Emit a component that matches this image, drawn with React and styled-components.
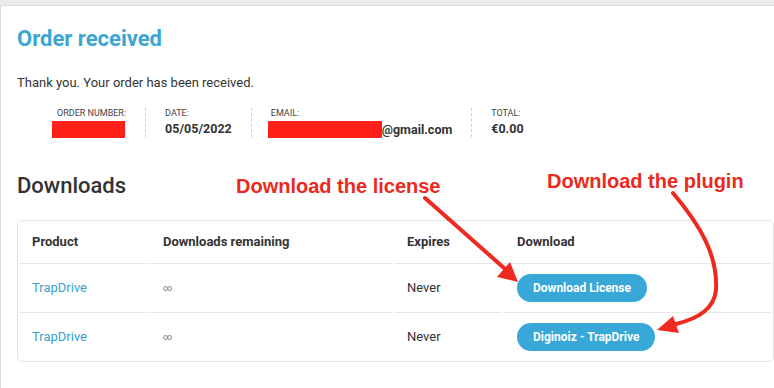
import React from "react";
import styled, { createGlobalStyle } from "styled-components";

const GlobalStyle = createGlobalStyle`
  body {
    margin: 0;
    background: #fff;
    font-family: Roboto, "Liberation Sans", Arial, sans-serif;
    color: #333;
  }
`;

const TopBar = styled.div`
  height: 5px;
  background: #ececec;
  border-bottom: 1px solid #dedede;
`;

const Page = styled.div`
  position: relative;
  border-left: 1px solid #dcdcdc;
  padding: 20px 0 30px 16px;
  height: 382px;
  box-sizing: border-box;
`;

const Title = styled.h2`
  margin: 0;
  font-size: 22px;
  line-height: 26px;
  font-weight: 700;
  color: #3ba6d3;
`;

const Thanks = styled.p`
  margin: 23px 0 0;
  font-size: 13px;
  line-height: 16px;
  color: #333;
`;

const Overview = styled.ul`
  list-style: none;
  display: flex;
  margin: 17px 0 0 21px;
  padding: 0;
`;

const OverviewItem = styled.li`
  padding: 0 19px;
  height: 29px;
  border-right: ${(p) => (p.$last ? "none" : "1px dashed #d0d0d0")};
  display: flex;
  flex-direction: column;
`;

const Label = styled.span`
  font-size: 9px;
  line-height: 11px;
  text-transform: uppercase;
  color: #444;
`;

const Value = styled.strong`
  margin-top: 2px;
  font-size: 12.5px;
  line-height: 16px;
  font-weight: 700;
  color: #333;
  display: flex;
  align-items: center;
`;

const Redacted = styled.span`
  display: inline-block;
  width: ${(p) => p.$w}px;
  height: 17px;
  background: #ff2119;
  margin-left: ${(p) => p.$shift || 0}px;
`;

const Heading = styled.h2`
  margin: 36px 0 0;
  font-size: 22px;
  line-height: 26px;
  font-weight: 500;
  color: #333;
`;

const TableWrap = styled.div`
  margin-top: 21px;
  width: 755px;
  border: 1px solid #e3e3e3;
  border-radius: 5px;
  overflow: hidden;
`;

const Table = styled.table`
  width: 100%;
  border-collapse: separate;
  border-spacing: 2px 0;
  table-layout: fixed;
  font-size: 13px;
`;

const HeadCell = styled.th`
  box-sizing: border-box;
  width: ${(p) => (p.$w ? `${p.$w}px` : "auto")};
  text-align: left;
  font-weight: 700;
  padding: 13px 13px 13px ${(p) => p.$pl || 13}px;
  line-height: 16px;
  color: #333;
`;

const Cell = styled.td`
  box-sizing: border-box;
  border-top: 1px solid #e6e6e6;
  padding: 10px 13px 10px ${(p) => p.$pl || 13}px;
  height: 49px;
  line-height: 16px;
  color: ${(p) => (p.$muted ? "#777" : "#333")};
  font-size: ${(p) => (p.$muted ? "9px" : "13px")};
`;

const ProductLink = styled.a`
  color: #3aa2cf;
  text-decoration: none;
`;

const Button = styled.a`
  display: inline-block;
  height: 28px;
  line-height: 28px;
  padding: 0 16px;
  border-radius: 14px;
  background: #37a8d7;
  color: #fff;
  font-weight: 700;
  font-size: 12px;
  text-decoration: none;
  white-space: nowrap;
`;

const Note = styled.div`
  position: absolute;
  left: ${(p) => p.$x}px;
  top: ${(p) => p.$y}px;
  font-family: "Liberation Sans", Arial, sans-serif;
  font-weight: 700;
  font-size: 20px;
  line-height: 23px;
  color: #ea2a20;
  white-space: nowrap;
`;

const Arrows = styled.svg`
  position: absolute;
  left: -1px;
  top: -6px;
  pointer-events: none;
`;

function App() {
  const rows = [
    { product: "TrapDrive", action: "Download License" },
    { product: "TrapDrive", action: "Diginoiz - TrapDrive" },
  ];
  return (
    <>
      <GlobalStyle />
      <TopBar />
      <Page>
        <Title>Order received</Title>
        <Thanks>Thank you. Your order has been received.</Thanks>
        <Overview>
          <OverviewItem>
            <Label>Order number:</Label>
            <Value>
              <Redacted $w={73} $shift={-5} />
            </Value>
          </OverviewItem>
          <OverviewItem>
            <Label>Date:</Label>
            <Value>05/05/2022</Value>
          </OverviewItem>
          <OverviewItem>
            <Label>Email:</Label>
            <Value>
              <Redacted $w={114} $shift={-3} />
              @gmail.com
            </Value>
          </OverviewItem>
          <OverviewItem $last>
            <Label>Total:</Label>
            <Value>€0.00</Value>
          </OverviewItem>
        </Overview>

        <Heading>Downloads</Heading>
        <TableWrap>
          <Table>
            <thead>
              <tr>
                <HeadCell $w={128} $pl={12}>Product</HeadCell>
                <HeadCell $w={242}>Downloads remaining</HeadCell>
                <HeadCell $w={108}>Expires</HeadCell>
                <HeadCell>Download</HeadCell>
              </tr>
            </thead>
            <tbody>
              {rows.map((r, i) => (
                <tr key={i}>
                  <Cell $pl={12}>
                    <ProductLink href="#">{r.product}</ProductLink>
                  </Cell>
                  <Cell $muted>∞</Cell>
                  <Cell>Never</Cell>
                  <Cell>
                    <Button href="#">{r.action}</Button>
                  </Cell>
                </tr>
              ))}
            </tbody>
          </Table>
        </TableWrap>

        <Note $x={235} $y={169}>Download the license</Note>
        <Note $x={546} $y={164}>Download the plugin</Note>

        <Arrows width="774" height="388" viewBox="0 0 774 388">
          <line x1="425" y1="198" x2="504" y2="268" stroke="#ee2a20" strokeWidth="4" strokeLinecap="round" />
          <polygon points="510,262 497,277 518,282" fill="#ee2a20" />
          <path
            d="M673 193 C700 225 718 255 716 290 C714 308 700 318 676 324"
            fill="none"
            stroke="#ee2a20"
            strokeWidth="4"
            strokeLinecap="round"
          />
          <polygon points="673,316 679,333 657,330" fill="#ee2a20" />
        </Arrows>
      </Page>
    </>
  );
}

export default App;
